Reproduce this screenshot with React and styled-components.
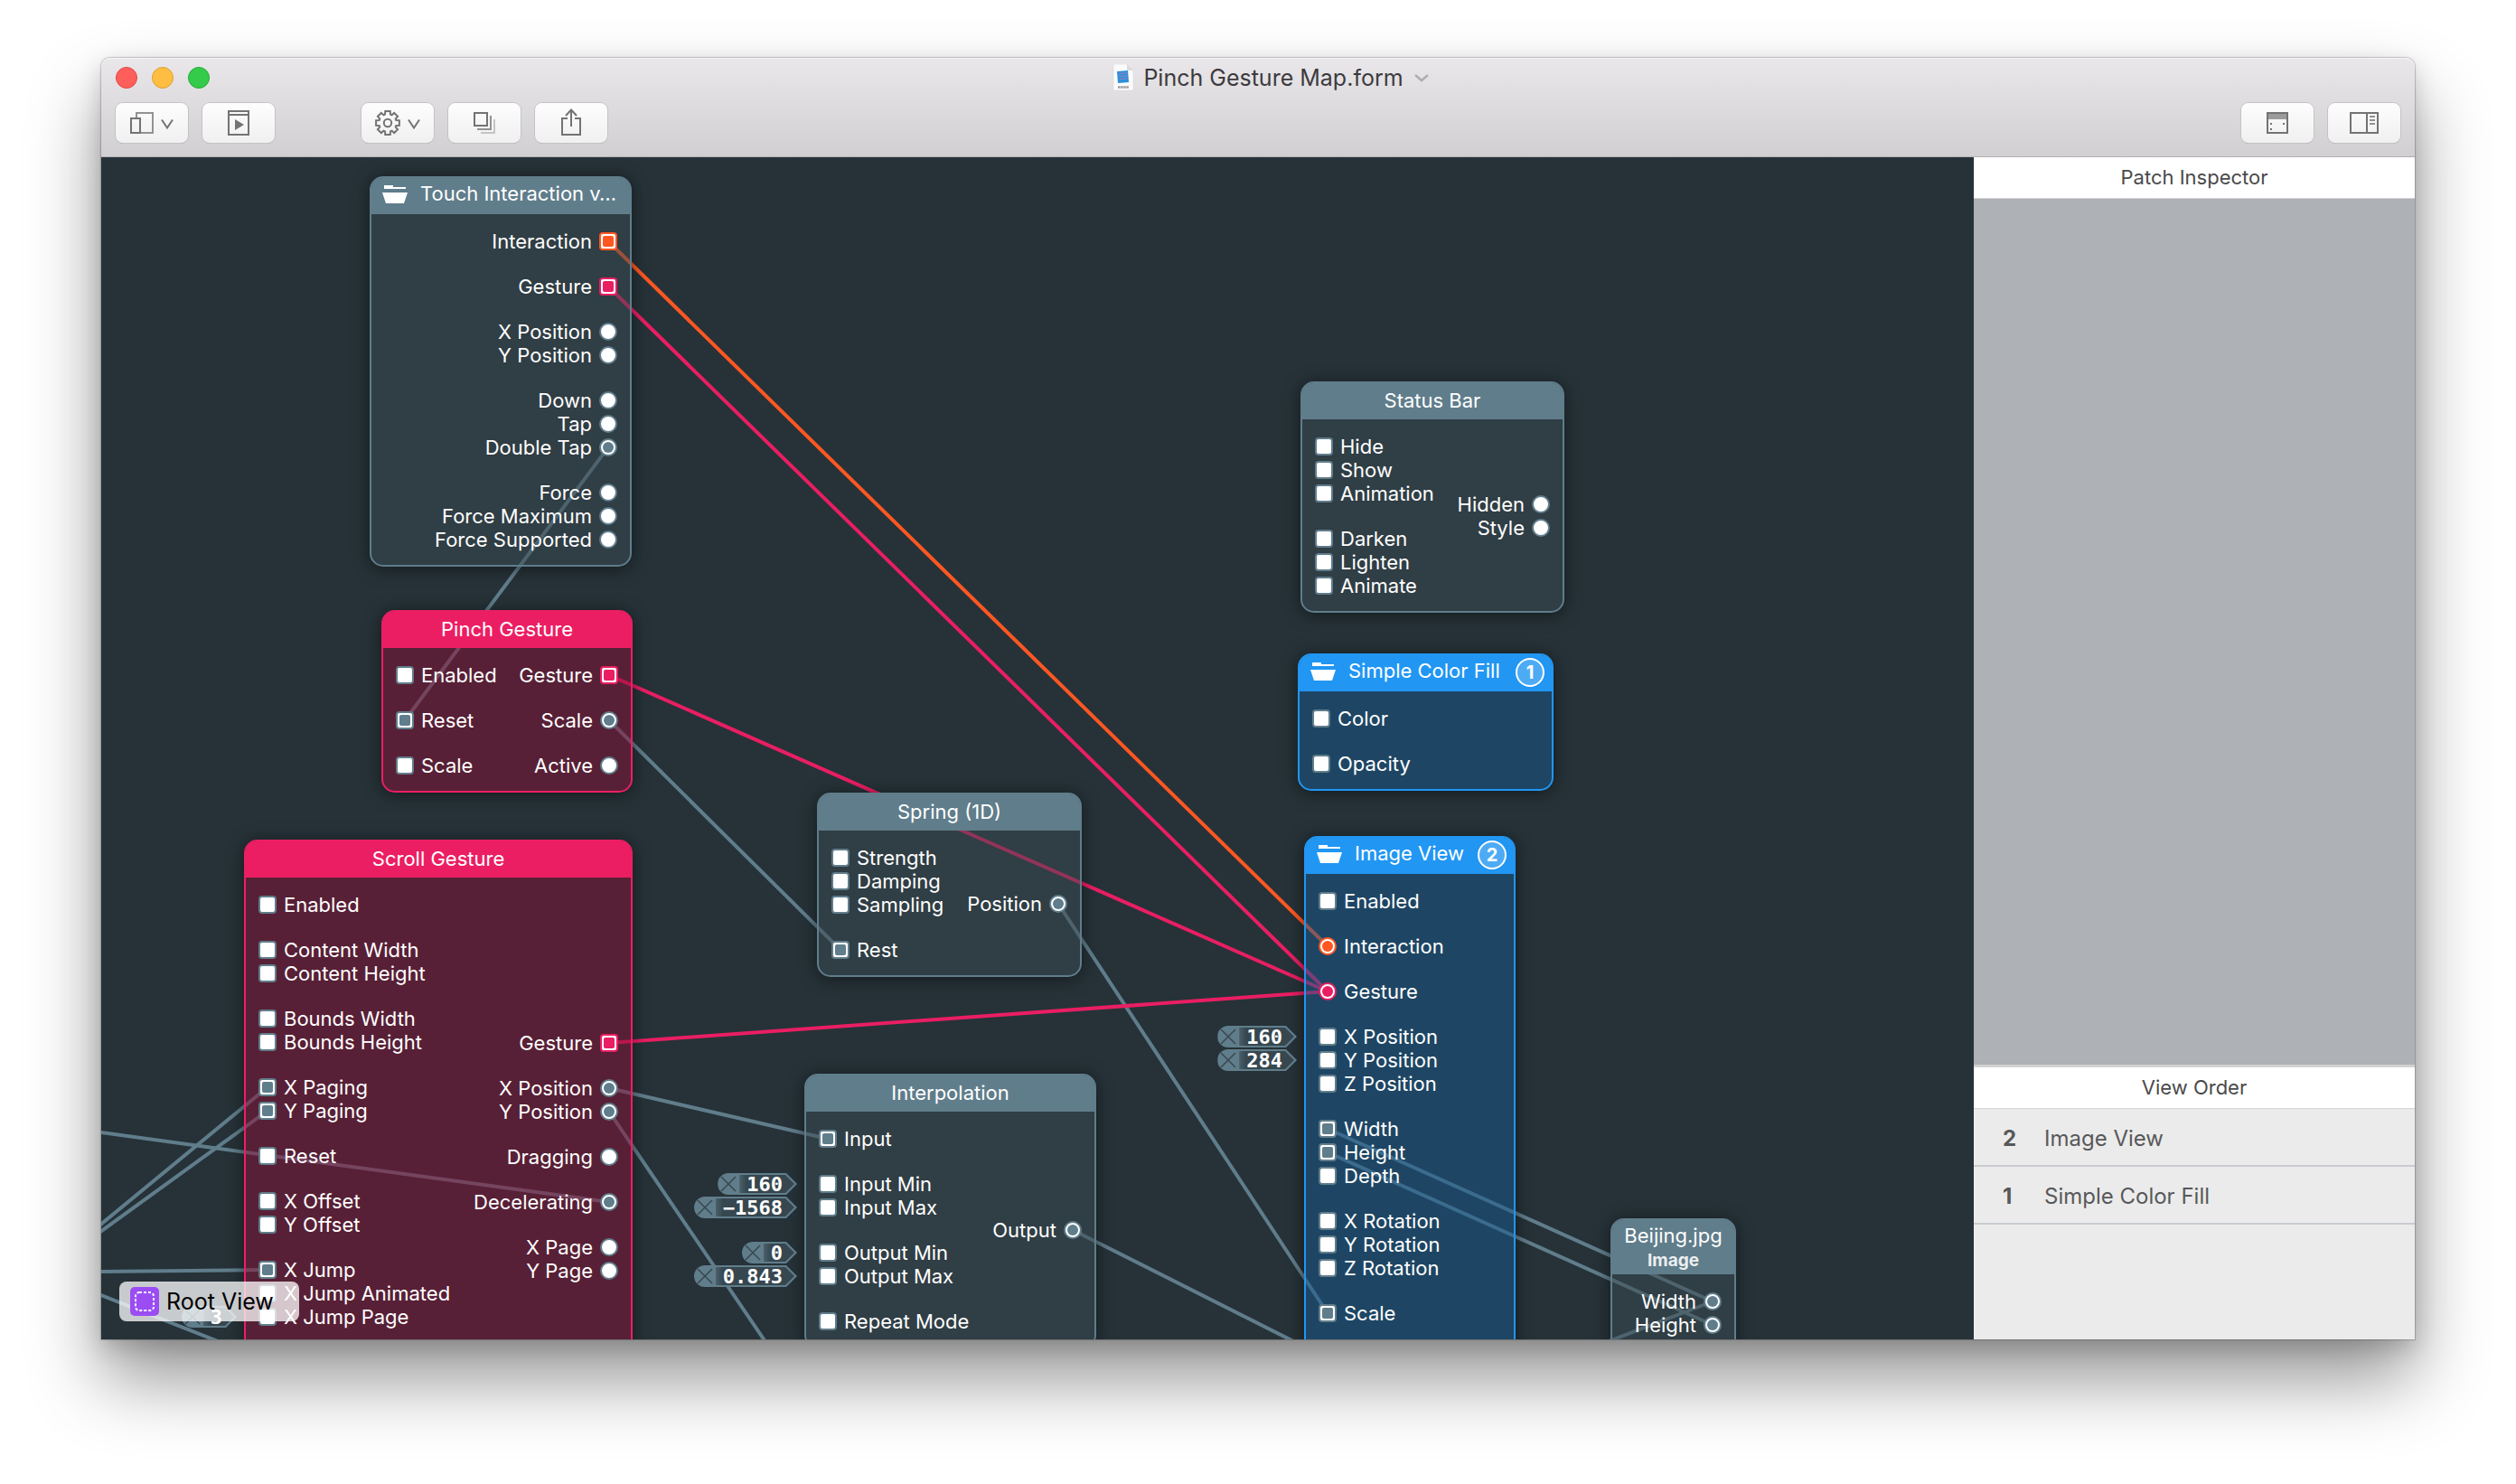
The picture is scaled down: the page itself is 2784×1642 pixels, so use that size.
import React from "react";
import styled, { createGlobalStyle, css } from "styled-components";

const UI = `Inter, "Liberation Sans", sans-serif`;
const MONO = `"DejaVu Sans Mono", "Liberation Mono", monospace`;
const SLATE = "#607d8b";
const PINK = "#e91e63";
const ORANGE = "#ff5722";
const BLUE = "#2196f3";

const tones = {
  slate: { edge: SLATE, body: "rgba(58, 73, 82, 0.5)" },
  pink: { edge: "#ec1e63", body: "rgba(138, 13, 52, 0.5)" },
  blue: { edge: BLUE, body: "rgba(22, 89, 144, 0.5)" },
};

const GlobalStyle = createGlobalStyle`
  *, *::before, *::after { box-sizing: border-box; }
  body { margin: 0; background: #fff; font-family: ${UI}; }
  button, input { font: inherit; color: inherit; }
`;

const Desktop = styled.div`
  min-height: 100vh;
  display: flex;
  padding: 64px 112px 160px;
`;

const Window = styled.main`
  flex: 1;
  min-width: 0;
  display: flex;
  flex-direction: column;
  border-radius: 10px 10px 0 0;
  box-shadow:
    0 0 1px 1px rgba(0, 0, 0, 0.2),
    0 8px 24px rgba(0, 0, 0, 0.16),
    0 44px 80px rgba(0, 0, 0, 0.42);
`;

const TitleBar = styled.header`
  height: 110px;
  padding: 10px 16px 15px;
  display: flex;
  flex-direction: column;
  justify-content: space-between;
  border-radius: 10px 10px 0 0;
  border-bottom: 1px solid #b1afb2;
  background: linear-gradient(#e9e7ea, #d1cfd2);
  box-shadow: inset 0 1px 0 #f6f5f7;
`;

const TitleRow = styled.div`
  display: grid;
  grid-template-columns: 1fr auto 1fr;
  grid-template-rows: 24px;
  align-items: center;
`;

const Lights = styled.div`
  display: flex;
  gap: 16px;
`;

const Light = styled.button`
  width: 24px;
  height: 24px;
  padding: 0;
  border-radius: 50%;
  border: 1px solid ${(p) => p.$rim};
  background: ${(p) => p.$fill};
`;

const Title = styled.h1`
  margin: 0;
  display: flex;
  align-items: center;
  gap: 10px;
  color: #3d3a3e;
  font-size: 25px;
  line-height: 32px;
  font-weight: 400;
`;

const TitleMenu = styled.button`
  justify-self: start;
  display: grid;
  padding: 0;
  margin-left: 12px;
  border: 0;
  background: none;
`;

const ToolRow = styled.div`
  display: flex;
  gap: 16px;
`;

const ToolGap = styled.div`
  width: ${(p) => p.$width || "auto"};
  flex: ${(p) => (p.$width ? "none" : 1)};
`;

const ToolButton = styled.button`
  width: 80px;
  height: 44px;
  padding: 0;
  display: grid;
  place-items: center;
  border: 0;
  border-radius: 8px;
  color: #737373;
  background: linear-gradient(#fdfdfd, #f1f0f1);
  box-shadow: 0 0 0 1px #c4c2c5, 0 2px 0 -1px #a3a1a4;
`;

const Workspace = styled.div`
  flex: 1;
  min-height: 0;
  display: grid;
  grid-template-columns: 1fr 488px;
`;

const Canvas = styled.section`
  position: relative;
  overflow: hidden;
  min-width: 0;
  background: #263238;
`;

const Wires = styled.svg`
  position: absolute;
  inset: 0;
  width: 100%;
  height: 100%;
`;

const NodeBox = styled.article`
  position: absolute;
  left: ${(p) => p.$x}px;
  top: ${(p) => p.$y}px;
  width: ${(p) => p.$w}px;
  border: 2px solid ${(p) => tones[p.$tone].edge};
  border-radius: 15px;
  background: ${(p) => tones[p.$tone].body};
  background-clip: padding-box;
  box-shadow: 0 2px 18px rgba(0, 0, 0, 0.5);
  color: #fff;
  font-size: 22px;
  line-height: 26px;
`;

const NodeHead = styled.header`
  position: relative;
  display: flex;
  justify-content: center;
  height: 40px;
  padding: ${(p) => (p.$folder ? "4px 12px 0" : "6px 12px 0")};
  gap: 14px;
  border-radius: 12px 12px 0 0;
  background: ${(p) => tones[p.$tone].edge};
  ${(p) =>
    p.$folder &&
    css`
      justify-content: flex-start;
    `}
  ${(p) =>
    p.$subtitled &&
    css`
      height: 60px;
      flex-direction: column;
      align-items: center;
      justify-content: flex-start;
      gap: 2px;
      padding-top: 4px;
    `}
`;

const NodeTitle = styled.h2`
  margin: 0;
  font-size: 22px;
  line-height: 26px;
  font-weight: 400;
  white-space: nowrap;
`;

const NodeSubtitle = styled.p`
  margin: 0;
  font-size: 19px;
  line-height: 26px;
  font-weight: 700;
  color: #eceff1;
`;

const FolderMark = styled.svg`
  flex: none;
  width: 28px;
  height: 20px;
  margin-top: 4px;
`;

const Badge = styled.span`
  position: absolute;
  right: 8px;
  top: 3px;
  width: 32px;
  height: 32px;
  display: grid;
  place-items: center;
  border: 2px solid #fff;
  border-radius: 50%;
  background: rgba(255, 255, 255, 0.2);
  font-size: 20px;
  line-height: 26px;
  font-weight: 700;
`;

const NodeBody = styled.div`
  display: flex;
  justify-content: space-between;
  align-items: center;
  padding: 17px 14px 15px;
`;

const Ports = styled.div`
  display: flex;
  flex-direction: column;
  gap: 24px;
  margin-left: ${(p) => (p.$out ? "auto" : "0")};
  padding-bottom: ${(p) => p.$tail || 0}px;
`;

const PortGroup = styled.ul`
  margin: 0;
  padding: 0;
  list-style: none;
`;

const PortRow = styled.li`
  position: relative;
  display: flex;
  flex-direction: ${(p) => (p.$out ? "row-reverse" : "row")};
  align-items: center;
  gap: 8px;
  height: 26px;
  white-space: nowrap;
`;

const Socket = styled.span`
  flex: none;
  width: 20px;
  height: 20px;
  padding: 2px;
  border: 2px solid ${(p) => p.$color};
  border-radius: ${(p) => (p.$round ? "50%" : "4px")};
  background: #fff;

  &::before {
    content: "";
    display: block;
    height: 12px;
    border-radius: ${(p) => (p.$round ? "50%" : "2px")};
    background: ${(p) => (p.$wired ? p.$color : "#fff")};
  }
`;

const Pin = styled.span`
  position: absolute;
  right: calc(100% + 24px);
  top: 1px;
  display: flex;
  height: 24px;
  padding: 2px 0;
  border-radius: 12px 0 0 12px;
  background: ${SLATE};
  clip-path: polygon(0 0, calc(100% - 12px) 0, 100% 50%, calc(100% - 12px) 100%, 0 100%);
`;

const PinClear = styled.button`
  width: 24px;
  height: 20px;
  padding: 0;
  border: 0;
  display: grid;
  place-items: center;
  color: #37474f;
  background: none;
`;

const PinValue = styled.input`
  width: calc(${(p) => p.$chars}ch + 21px);
  height: 20px;
  margin-right: 3px;
  padding: 0 13px 0 8px;
  border: 0;
  border-radius: 0;
  outline: 0;
  color: #fff;
  font-family: ${MONO};
  font-size: 22px;
  line-height: 20px;
  font-weight: 700;
  background: linear-gradient(90deg, #4a606b, #37474f 8px);
  clip-path: polygon(0 0, calc(100% - 10px) 0, 100% 50%, calc(100% - 10px) 100%, 0 100%);
`;

const RootButton = styled.button`
  position: absolute;
  left: 20px;
  bottom: 20px;
  height: 44px;
  padding: 0 28px 0 12px;
  display: flex;
  align-items: center;
  gap: 8px;
  border: 0;
  border-radius: 8px;
  color: #000;
  background: rgba(255, 255, 255, 0.75);
  font-size: 25px;
  line-height: 32px;
`;

const Sidebar = styled.aside`
  display: flex;
  flex-direction: column;
  background: #ebebeb;
`;

const PanelTitle = styled.h2`
  margin: 0;
  height: 46px;
  border-bottom: 1px solid #d5d5d5;
  background: #fff;
  color: #4a4a4a;
  font-size: 22px;
  line-height: 44px;
  font-weight: 400;
  text-align: center;
`;

const InspectorArea = styled.div`
  flex: 1;
  border-bottom: 3px solid #d2d2d3;
  background: #aeb1b6;
`;

const OrderPanel = styled.section`
  height: 301px;
`;

const OrderList = styled.ol`
  margin: 0;
  padding: 0;
  list-style: none;
`;

const OrderItem = styled.li`
  display: flex;
  align-items: center;
  height: 64px;
  padding: 4px 32px 0;
  border-bottom: 2px solid #c8cbcf;
  color: #58585a;
  font-size: 24px;
  line-height: 32px;
`;

const OrderIndex = styled.strong`
  width: 46px;
  font-weight: 700;
`;

const Folder = () => (
  <FolderMark viewBox="0 0 28 20" fill="#fff" aria-hidden="true">
    <path d="M2 0h10v2h14v2H2zM0 8h28l-4 12H4z" />
  </FolderMark>
);

const Drop = ({ x }) => <path d={`M${x} 18.500l6 9 6-9`} />;

const Icon = ({ children }) => (
  <svg width="80" height="44" viewBox="0 0 80 44" fill="none" stroke="currentColor" strokeWidth="2" aria-hidden="true">
    {children}
  </svg>
);

const gearPath = (() => {
  const pts = [];
  for (let i = 0; i < 8; i++) {
    const base = (i * Math.PI) / 4 - Math.PI / 2;
    [[-0.31, 9.8], [-0.21, 13.2], [0.21, 13.2], [0.31, 9.8]].forEach(([a, r]) => {
      pts.push(`${(29 + r * Math.cos(base + a)).toFixed(2)} ${(22 + r * Math.sin(base + a)).toFixed(2)}`);
    });
  }
  return `M${pts.join("L")}Z`;
})();

const PanesIcon = () => (
  <Icon>
    <path d="M23 16v-5h18v22H28" stroke="#929292" />
    <rect x="17" y="17" width="10" height="16" />
    <Drop x={51} />
  </Icon>
);
const PlayIcon = () => (
  <Icon>
    <rect x="29" y="9" width="22" height="26" />
    <path d="M29 13h22" />
    <path d="M36 18l10 6-10 6z" fill="currentColor" stroke="none" />
  </Icon>
);
const GearIcon = () => (
  <Icon>
    <path d={gearPath} />
    <circle cx="29" cy="22" r="4.200" />
    <Drop x={52} />
  </Icon>
);
const LayersIcon = () => (
  <Icon>
    <rect x="29" y="11" width="14" height="14" />
    <path d="M47 14v15H32" stroke="#929292" />
    <path d="M51 18v15H36" stroke="#c4c4c4" />
  </Icon>
);
const ShareIcon = () => (
  <Icon>
    <path d="M36 17h-6v18h20V17h-6M40 26V7M34 14l6-6.500 6 6.500" />
  </Icon>
);
const KeyboardIcon = () => (
  <Icon>
    <path d="M30 12h20v6H30z" fill="#9b9b9b" stroke="none" />
    <rect x="29" y="11" width="22" height="22" />
    <path d="M32 22h2v2h-2zM46 22h2v2h-2zM32 28h2v2h-2z" fill="currentColor" stroke="none" />
  </Icon>
);
const InspectorIcon = () => (
  <Icon>
    <rect x="25" y="11" width="30" height="22" />
    <path d="M43 11v22" />
    <path d="M46 15h6M46 19h6M46 23h6" stroke="#929292" />
  </Icon>
);

const DocIcon = () => (
  <svg width="24" height="30" viewBox="0 0 24 30" aria-hidden="true">
    <path d="M1 0h15l7 7v22H1z" fill="#fbfbfb" stroke="#d8d8da" strokeWidth="0.600" />
    <path d="M16 0v7h7z" fill="#dcdcde" />
    <path d="M5 8l12-1 1 13-12 1z" fill="#2e8fdc" />
    <path d="M7 10.500l9-.7M7.500 13.500l9-.6M8 16.500l8-.6" stroke="#7a86c4" strokeWidth="1.500" />
    <path d="M6 25.500h12" stroke="#9a9a9a" strokeWidth="2.500" strokeDasharray="2.500 0.600" />
  </svg>
);

const p = (label, opts = {}) => ({ label, ...opts });
const on = { wired: true };

const nodes = [
  {
    title: "Touch Interaction v…", tone: "slate", folder: true, x: 297, y: 21, w: 290,
    outputs: [
      [p("Interaction", { wired: true, color: ORANGE, square: true })],
      [p("Gesture", { wired: true, color: PINK, square: true })],
      [p("X Position"), p("Y Position")],
      [p("Down"), p("Tap"), p("Double Tap", on)],
      [p("Force"), p("Force Maximum"), p("Force Supported")],
    ],
  },
  {
    title: "Pinch Gesture", tone: "pink", x: 310, y: 501, w: 278,
    inputs: [[p("Enabled")], [p("Reset", on)], [p("Scale")]],
    outputs: [[p("Gesture", { wired: true, color: PINK, square: true })], [p("Scale", on)], [p("Active")]],
  },
  {
    title: "Scroll Gesture", tone: "pink", x: 158, y: 755, w: 430, tail: 102,
    inputs: [
      [p("Enabled")],
      [p("Content Width"), p("Content Height")],
      [p("Bounds Width"), p("Bounds Height")],
      [p("X Paging", on), p("Y Paging", on)],
      [p("Reset")],
      [p("X Offset"), p("Y Offset")],
      [p("X Jump", on), p("X Jump Animated"), p("X Jump Page", { value: "3" })],
    ],
    outputs: [
      [p("Gesture", { wired: true, color: PINK, square: true })],
      [p("X Position", on), p("Y Position", on)],
      [p("Dragging")],
      [p("Decelerating", on)],
      [p("X Page"), p("Y Page")],
    ],
  },
  {
    title: "Spring (1D)", tone: "slate", x: 792, y: 703, w: 293,
    inputs: [[p("Strength"), p("Damping"), p("Sampling")], [p("Rest", on)]],
    outputs: [[p("Position", on)]],
  },
  {
    title: "Interpolation", tone: "slate", x: 778, y: 1014, w: 323,
    inputs: [
      [p("Input", on)],
      [p("Input Min", { value: "160" }), p("Input Max", { value: "−1568" })],
      [p("Output Min", { value: "0" }), p("Output Max", { value: "0.843" })],
      [p("Repeat Mode")],
    ],
    outputs: [[p("Output", on)]],
  },
  {
    title: "Status Bar", tone: "slate", x: 1327, y: 248, w: 292,
    inputs: [
      [p("Hide"), p("Show"), p("Animation")],
      [p("Darken"), p("Lighten"), p("Animate")],
    ],
    outputs: [[p("Hidden"), p("Style")]],
  },
  {
    title: "Simple Color Fill", tone: "blue", folder: true, badge: 1, x: 1324, y: 549, w: 283,
    inputs: [[p("Color")], [p("Opacity")]],
  },
  {
    title: "Image View", tone: "blue", folder: true, badge: 2, x: 1331, y: 751, w: 234, tail: 74,
    inputs: [
      [p("Enabled")],
      [p("Interaction", { wired: true, color: ORANGE, round: true })],
      [p("Gesture", { wired: true, color: PINK, round: true })],
      [p("X Position", { value: "160" }), p("Y Position", { value: "284" }), p("Z Position")],
      [p("Width", on), p("Height", on), p("Depth")],
      [p("X Rotation"), p("Y Rotation"), p("Z Rotation")],
      [p("Scale", on)],
    ],
  },
  {
    title: "Beijing.jpg", subtitle: "Image", tone: "slate", x: 1670, y: 1174, w: 139,
    outputs: [[p("Width", on), p("Height", on)]],
  },
];

const wires = [
  [561, 321, 336, 623, SLATE],
  [562, 623, 818, 877, SLATE],
  [1059, 826, 1357, 1279, SLATE],
  [562, 1030, 804, 1086, SLATE],
  [562, 1056, 740, 1318, SLATE],
  [1075, 1187, 1335, 1318, SLATE],
  [562, 1156, -8, 1078, SLATE],
  [184, 1029, -8, 1187, SLATE],
  [184, 1055, -8, 1194, SLATE],
  [184, 1231, -8, 1233, SLATE],
  [-8, 1256, 134, 1312, SLATE],
  [1357, 1075, 1783, 1266, SLATE],
  [1357, 1101, 1783, 1292, SLATE],
  [1783, 1266, 1650, 1317, SLATE],
  [562, 980, 1357, 923, PINK],
  [562, 573, 1357, 923, PINK],
  [561, 143, 1357, 923, PINK],
  [561, 93, 1357, 873, ORANGE],
];

function Port({ port, out }) {
  const round = port.round || (out && !port.square);
  return (
    <PortRow $out={out}>
      <Socket $color={port.color || SLATE} $wired={port.wired} $round={round} />
      <span>{port.label}</span>
      {port.value && (
        <Pin>
          <PinClear type="button" aria-label={`Clear ${port.label}`}>
            <svg width="18" height="18" viewBox="0 0 18 18" stroke="currentColor" strokeWidth="1.500">
              <path d="M1 1l16 16M17 1L1 17" />
            </svg>
          </PinClear>
          <PinValue aria-label={port.label} defaultValue={port.value} $chars={port.value.length} />
        </Pin>
      )}
    </PortRow>
  );
}

function PortColumn({ groups, out, tail }) {
  if (!groups) return null;
  return (
    <Ports $out={out} $tail={tail}>
      {groups.map((group, i) => (
        <PortGroup key={i}>
          {group.map((port) => (
            <Port key={port.label} port={port} out={out} />
          ))}
        </PortGroup>
      ))}
    </Ports>
  );
}

function Node({ node }) {
  return (
    <NodeBox $x={node.x} $y={node.y} $w={node.w} $tone={node.tone}>
      <NodeHead $tone={node.tone} $folder={node.folder} $subtitled={!!node.subtitle}>
        {node.folder && <Folder />}
        <NodeTitle>{node.title}</NodeTitle>
        {node.subtitle && <NodeSubtitle>{node.subtitle}</NodeSubtitle>}
        {node.badge && <Badge>{node.badge}</Badge>}
      </NodeHead>
      <NodeBody>
        <PortColumn groups={node.inputs} tail={node.tail} />
        <PortColumn groups={node.outputs} out />
      </NodeBody>
    </NodeBox>
  );
}

export default function App() {
  return (
    <Desktop>
      <GlobalStyle />
      <Window>
        <TitleBar>
          <TitleRow>
            <Lights>
              <Light aria-label="Close" $fill="#ff5f5b" $rim="#e24640" />
              <Light aria-label="Minimize" $fill="#ffbe41" $rim="#dfa02f" />
              <Light aria-label="Zoom" $fill="#34cb4b" $rim="#24ab35" />
            </Lights>
            <Title>
              <DocIcon />
              Pinch Gesture Map.form
            </Title>
            <TitleMenu type="button" aria-label="Document menu">
              <svg width="16" height="9" viewBox="0 0 16 9" fill="none" stroke="#b0aeb1" strokeWidth="2.500" aria-hidden="true">
                <path d="M1 1l7 6 7-6" />
              </svg>
            </TitleMenu>
          </TitleRow>
          <ToolRow>
            <ToolButton aria-label="Panes"><PanesIcon /></ToolButton>
            <ToolButton aria-label="Preview"><PlayIcon /></ToolButton>
            <ToolGap $width="64px" />
            <ToolButton aria-label="Settings"><GearIcon /></ToolButton>
            <ToolButton aria-label="Layers"><LayersIcon /></ToolButton>
            <ToolButton aria-label="Share"><ShareIcon /></ToolButton>
            <ToolGap />
            <ToolButton aria-label="Viewer"><KeyboardIcon /></ToolButton>
            <ToolButton aria-label="Inspector"><InspectorIcon /></ToolButton>
          </ToolRow>
        </TitleBar>
        <Workspace>
          <Canvas>
            <Wires aria-hidden="true">
              {wires.map(([x1, y1, x2, y2, color], i) => (
                <line key={i} x1={x1} y1={y1} x2={x2} y2={y2} stroke={color} strokeWidth="4" />
              ))}
            </Wires>
            {nodes.map((node) => (
              <Node key={node.title} node={node} />
            ))}
            <RootButton type="button">
              <svg width="32" height="32" viewBox="0 0 32 32" aria-hidden="true">
                <rect width="32" height="32" rx="5" fill="#9b4df3" />
                <rect x="6" y="6" width="20" height="20" rx="4" fill="none" stroke="#fff" strokeWidth="2" strokeDasharray="3 2" />
              </svg>
              Root View
            </RootButton>
          </Canvas>
          <Sidebar>
            <PanelTitle>Patch Inspector</PanelTitle>
            <InspectorArea />
            <OrderPanel>
              <PanelTitle>View Order</PanelTitle>
              <OrderList>
                <OrderItem><OrderIndex>2</OrderIndex>Image View</OrderItem>
                <OrderItem><OrderIndex>1</OrderIndex>Simple Color Fill</OrderItem>
              </OrderList>
            </OrderPanel>
          </Sidebar>
        </Workspace>
      </Window>
    </Desktop>
  );
}
